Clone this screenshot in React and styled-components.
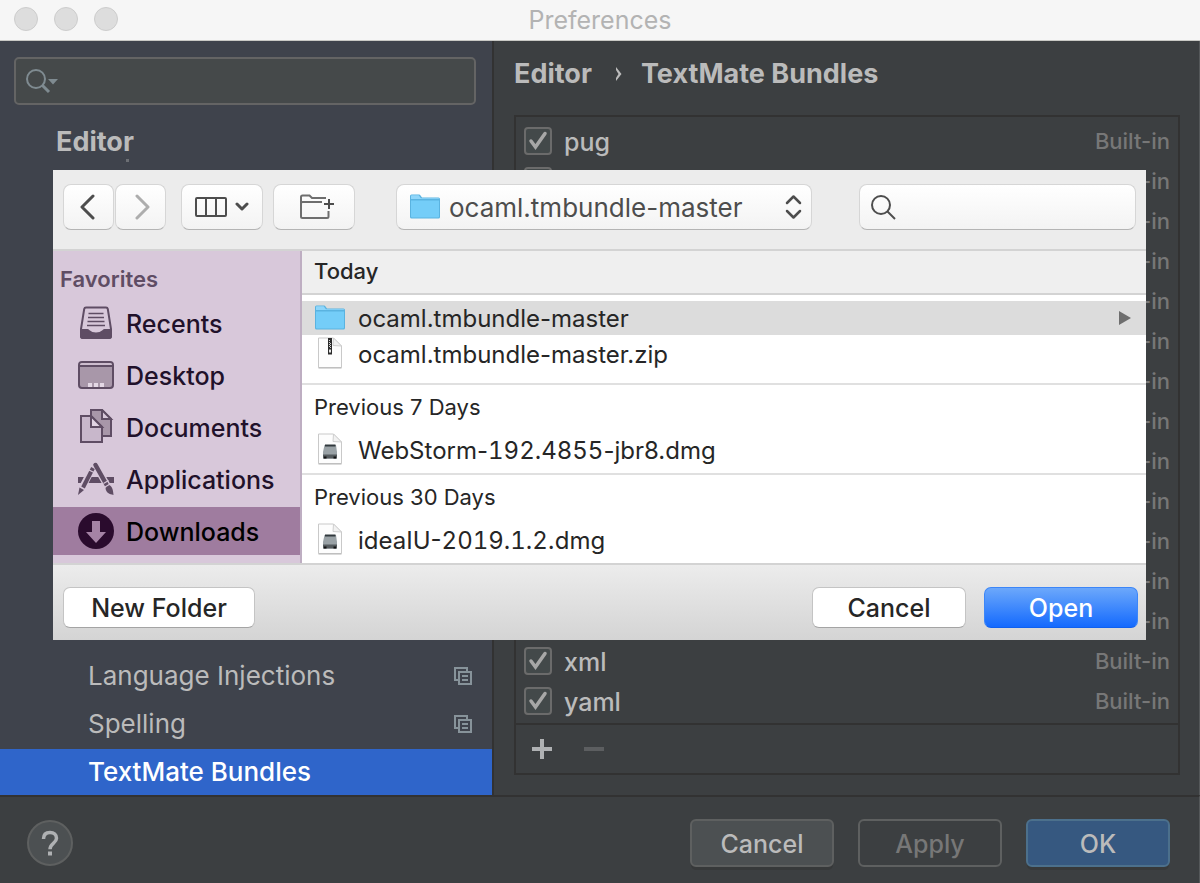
import React from "react";
import styled, { createGlobalStyle, css } from "styled-components";

const GlobalStyle = createGlobalStyle`
  *, *::before, *::after { box-sizing: border-box; }
  body {
    margin: 0;
    background: #3c3f41;
    font-family: Inter, "Liberation Sans", sans-serif;
    font-size: 25px;
    line-height: 32px;
  }
  button, input, select { font: inherit; margin: 0; }
  ul { list-style: none; margin: 0; padding: 0; }
  h1, h2, h3 { margin: 0; font: inherit; }
  svg { display: block; flex: none; }
`;

/* ---------- preferences window ---------- */

const Window = styled.div`
  position: relative;
  display: flex;
  flex-direction: column;
  min-height: 100vh;
  color: #bbbbbb;
  background: #3c3f41;
`;

const TitleBar = styled.header`
  display: grid;
  grid-template-columns: 1fr auto 1fr;
  align-items: center;
  height: 41px;
  padding: 0 14px;
  background: #f6f6f6;
  border-bottom: 1px solid #c9c9c5;
  color: #b3b3b3;
`;

const Lights = styled.div`
  display: flex;
  gap: 16px;
  padding-bottom: 2px;
`;

const Light = styled.button`
  width: 24px;
  height: 24px;
  padding: 0;
  border: 1px solid #cdcdcd;
  border-radius: 50%;
  background: #dddddd;
`;

const Body = styled.div`
  display: flex;
  flex: 1;
  border-right: 1px solid #55585a;
`;

const Sidebar = styled.aside`
  display: flex;
  flex-direction: column;
  width: 494px;
  flex: none;
  padding-top: 16px;
  background: #3f434c;
  border-right: 2px solid #323232;
`;

const Overlay = styled.div`
  display: grid;
  align-items: center;
  & > * { grid-area: 1 / 1; }
  & > svg { pointer-events: none; }
`;

const SettingsSearch = styled(Overlay)`
  margin: 0 16px 0 14px;
  & > svg { margin-left: 12px; }
`;

const SettingsInput = styled.input`
  width: 100%;
  height: 48px;
  padding: 0 12px 0 52px;
  color: #bbbbbb;
  background: #45494a;
  border: 2px solid #646464;
  border-radius: 5px;
  outline: none;
`;

const TreeRoot = styled.h2`
  margin: 20px 0 0 56px;
  padding-top: 1px;
  font-size: 27px;
  font-weight: 700;
  &::after {
    content: "";
    display: block;
    width: 3px;
    height: 3px;
    margin: 1px 0 0 70px;
    background: #6c6f74;
  }
`;

const Tree = styled.ul`
  display: flex;
  flex-direction: column;
  gap: 2px;
  margin-top: auto;
`;

const TreeItem = styled.li`
  display: flex;
  align-items: center;
  justify-content: space-between;
  height: 46px;
  padding: 0 20px 0 88px;
  font-size: 26px;
  ${(p) => p.$selected && css`
    font-weight: 500;
    color: #ffffff;
    background: #2f65ca;
  `}
`;

const Content = styled.main`
  flex: 1;
  display: flex;
  flex-direction: column;
  min-width: 0;
  padding: 17px 19px 20px 20px;
`;

const Breadcrumb = styled.nav`
  display: flex;
  align-items: center;
  height: 32px;
  margin-bottom: 25px;
  font-size: 27px;
  font-weight: 700;
  & > svg { margin: 0 18px 0 23px; }
`;

const BundlePanel = styled.section`
  border: 2px solid #323232;
`;

const BundleList = styled.ul`
  padding: 4px 0 2px;
`;

const BundleRow = styled.li`
  display: flex;
  align-items: center;
  justify-content: space-between;
  height: 40px;
  padding: 0 8px;
`;

const BundleLabel = styled.label`
  display: flex;
  align-items: center;
  gap: 12px;
  font-weight: 500;
`;

const Label = styled.span`
  padding-top: 2px;
`;

const Digits = styled.span`
  font-variant-numeric: tabular-nums;
`;

const Check = styled.input`
  appearance: none;
  width: 28px;
  height: 28px;
  background: #43494a;
  border: 2px solid #6b6b6b;
  border-radius: 4px;
`;

const Origin = styled.span`
  font-size: 22px;
  font-weight: 500;
  color: #777777;
`;

const PanelTools = styled.div`
  display: flex;
  align-items: center;
  gap: 32px;
  height: 50px;
  padding-left: 16px;
  border-top: 2px solid #323232;
`;

const ToolButton = styled.button`
  padding: 0;
  border: 0;
  background: none;
`;

const Footer = styled.footer`
  display: flex;
  align-items: flex-start;
  gap: 24px;
  height: 88px;
  padding: 22px 29px 0 27px;
  border-top: 2px solid #323232;
  border-right: 1px solid #55585a;
`;

const HelpButton = styled.button`
  display: grid;
  place-items: center;
  width: 46px;
  height: 46px;
  margin: 1px auto 0 0;
  padding: 0;
  color: #b0b2b3;
  background: #4c5052;
  border: 2px solid #5e6060;
  border-radius: 50%;
`;

const PrefButton = styled.button`
  width: 144px;
  height: 48px;
  padding: 2px 0 0;
  border-radius: 6px;
  font-weight: 500;
  color: #bbbbbb;
  background: #4c5052;
  border: 2px solid #5e6060;
  box-shadow: 0 4px 0 -1px #37393a;
  ${(p) => p.$kind === "default" && css`
    background: #365880;
    border-color: #4c708c;
  `}
  ${(p) => p.$kind === "disabled" && css`
    color: #777777;
    background: none;
    box-shadow: none;
  `}
`;

/* ---------- file chooser ---------- */

const Chooser = styled.section`
  position: absolute;
  top: 170px;
  left: 53px;
  right: 54px;
  display: flex;
  flex-direction: column;
  color: #262626;
  background: #ececec;
`;

const Toolbar = styled.div`
  display: flex;
  align-items: center;
  height: 81px;
  padding: 0 10px 6px;
  border-bottom: 2px solid #d3d3d3;
`;

const raised = css`
  height: 46px;
  color: #4d4d4d;
  background: linear-gradient(#ffffff, #f3f3f3);
  border: 1px solid #d6d6d6;
  border-bottom-color: #b4b4b4;
  border-radius: 8px;
`;

const BarButton = styled.button`
  ${raised}
  display: flex;
  align-items: center;
  justify-content: center;
  gap: 8px;
  flex: none;
  width: ${(p) => (p.$wide ? 82 : 51)}px;
  padding: 0;
`;

const NavPair = styled.div`
  display: flex;
  gap: 1px;
  margin-right: 15px;
`;

const ViewPair = styled.div`
  display: flex;
  gap: 10px;
`;

const Location = styled(Overlay)`
  flex: 3 1 0;
  margin: 0 47px 0 41px;
  & > svg:nth-of-type(1) { margin-left: 14px; }
  & > svg:nth-of-type(2) { justify-self: end; margin-right: 10px; }
`;

const LocationSelect = styled.select`
  ${raised}
  appearance: none;
  width: 100%;
  padding: 2px 40px 0 52px;
  font-size: 26px;
`;

const ChooserSearch = styled(Overlay)`
  flex: 2 1 0;
  & > svg { margin-left: 11px; }
`;

const ChooserInput = styled.input`
  ${raised}
  width: 100%;
  padding: 0 12px 0 48px;
  outline: none;
`;

const Panes = styled.div`
  display: flex;
  height: 314px;
  border-bottom: 2px solid #d3d3d3;
`;

const Places = styled.nav`
  flex: none;
  width: 249px;
  padding-top: 12px;
  color: #21112a;
  background: #d8c8da;
  border-right: 2px solid #beaec2;
`;

const PlacesTitle = styled.h3`
  margin-bottom: 4px;
  padding-left: 7px;
  font-size: 22px;
  font-weight: 600;
  color: #5f4d64;
`;

const PlaceList = styled.ul`
  display: flex;
  flex-direction: column;
  gap: 4px;
`;

const Place = styled.li`
  display: flex;
  align-items: center;
  gap: 12px;
  height: 48px;
  padding-left: 25px;
  font-weight: 500;
  ${(p) => p.$selected && css`
    color: #000000;
    background: #9f7c9f;
  `}
`;

const Files = styled.div`
  flex: 1;
  min-width: 0;
  background: #ffffff;
`;

const Group = styled.section`
  border-top: ${(p) => (p.$first ? 0 : 2)}px solid #e0e0e0;
  padding-bottom: ${(p) => (p.$first ? 12 : 6)}px;
`;

const GroupTitle = styled.h3`
  height: 44px;
  padding-left: 12px;
  font-size: 22px;
  line-height: 44px;
  ${(p) => p.$first && css`
    font-weight: 500;
    line-height: 40px;
    background: #efefef;
    border-bottom: 2px solid #d3d3d3;
  `}
`;

const FileList = styled.ul`
  display: flex;
  flex-direction: column;
  gap: 2px;
  padding-top: ${(p) => (p.$first ? 6 : 4)}px;
`;

const FileRow = styled.li`
  display: flex;
  align-items: center;
  gap: 13px;
  height: 34px;
  padding: 0 14px 0 13px;
  font-size: 24px;
  background: ${(p) => (p.$selected ? "#dcdcdc" : "none")};
  & > svg:nth-of-type(2) { margin-left: auto; }
`;

const Actions = styled.div`
  display: flex;
  align-items: flex-start;
  gap: 18px;
  height: 75px;
  padding: 22px 8px 0 10px;
  background: linear-gradient(#ececec, #d4d4d4);
`;

const ActionButton = styled.button`
  width: ${(p) => (p.$start ? 192 : 154)}px;
  height: 41px;
  margin-right: ${(p) => (p.$start ? "auto" : 0)};
  padding: 0;
  font-weight: 500;
  color: ${(p) => (p.$primary ? "#ffffff" : "#262626")};
  background: ${(p) => (p.$primary ? "linear-gradient(#6ca8fb, #146afe)" : "#ffffff")};
  border: 1px solid ${(p) => (p.$primary ? "#3c86f8" : "#c4c4c4")};
  border-bottom-color: ${(p) => (p.$primary ? "#0f60ee" : "#a4a4a4")};
  border-radius: 7px;
`;

/* ---------- icons ---------- */

const SettingsSearchIcon = () => (
  <svg width="34" height="26" viewBox="0 0 34 26" fill="none" stroke="#7f8b91">
    <circle cx="10" cy="11" r="9" strokeWidth="2" />
    <path d="M16.5 17.5L23 24" strokeWidth="3" />
    <path d="M22 11h10l-5 5.500z" fill="#7f8b91" stroke="none" />
  </svg>
);

const CopyIcon = () => (
  <svg width="18" height="18" viewBox="0 0 18 18" fill="none" stroke="#87939a" strokeWidth="2">
    <path d="M4 13H1V1h12v3" />
    <path d="M5 5h12v12H5z" />
    <path d="M8 9h6M8 13h6" />
  </svg>
);

const CrumbArrow = () => (
  <svg width="8" height="16" viewBox="0 0 8 16" fill="#bbbbbb">
    <path d="M1 1l5.500 7L1 15v-3l2.500-4L1 4z" />
  </svg>
);

const CheckMark = () => (
  <svg width="28" height="28" viewBox="0 0 28 28" fill="none" stroke="#a7a7a7" strokeWidth="3.500">
    <path d="M7 14l4.500 6L21 6.500" strokeLinecap="round" />
  </svg>
);

const AddIcon = () => (
  <svg width="20" height="20" viewBox="0 0 20 20" fill="#afb1b3">
    <path d="M8 0h4v8h8v4h-8v8H8v-8H0V8h8z" />
  </svg>
);

const RemoveIcon = () => (
  <svg width="20" height="20" viewBox="0 0 20 20" fill="#5c5e60">
    <path d="M0 8h20v4H0z" />
  </svg>
);

const HelpIcon = () => (
  <svg width="18" height="26" viewBox="0 0 18 26" fill="none" stroke="#afb1b3" strokeWidth="3.500">
    <path d="M2.500 9c0-4.200 2.500-6.500 6.500-6.500s6.500 2.300 6.500 5.700c0 4.800-6.500 5.400-6.500 11" />
    <path d="M9 21.500v4" strokeWidth="4" />
  </svg>
);

const Chevron = ({ forward }) => (
  <svg width="18" height="26" viewBox={forward ? "-2 0 18 26" : "0 0 18 26"} fill="none" stroke={forward ? "#adadad" : "#4d4d4d"} strokeWidth="3" strokeLinecap="round" strokeLinejoin="round">
    <path d={forward ? "M3 2l11 11L3 24" : "M13 2L2 13l11 11"} />
  </svg>
);

const ColumnsIcon = () => (
  <svg width="32" height="20" viewBox="0 0 32 20" fill="none" stroke="#4d4d4d" strokeWidth="2">
    <rect x="1" y="1" width="30" height="18" rx="1" />
    <path d="M11 1v18M21 1v18" />
  </svg>
);

const DownIcon = () => (
  <svg width="14" height="9" viewBox="0 0 14 9" fill="none" stroke="#4d4d4d" strokeWidth="3" strokeLinecap="round" strokeLinejoin="round">
    <path d="M2 2l5 5 5-5" />
  </svg>
);

const NewFolderIcon = () => (
  <svg width="40" height="26" viewBox="-4 0 40 26" fill="none" stroke="#6e6e6e" strokeWidth="2">
    <path d="M28 4H14L11.500 1.500H4.500Q3 1.500 3 3v19.500q0 1.500 1.500 1.500H29q1.500 0 1.500-1.500V17M3 9.500q0-1.500 1.500-1.500H24" />
    <path d="M31 5v10M26 10h10" stroke="#4d4d4d" />
  </svg>
);

const FolderIcon = () => (
  <svg width="30" height="26" viewBox="0 0 30 26">
    <path d="M0 2q0-1.500 1.500-1.500h7.500q1 0 1.500 1L12 3.500h16.500q1.500 0 1.500 1.500v18q0 1.500-1.500 1.500h-27Q0 24.500 0 23z" fill="#5ab3e0" />
    <path d="M1 5V2q0-.700.700-.700h7l2.200 3H28.500q.5 0 .5.700z" fill="#8fd6fa" />
    <path d="M1 6.500h28V22.500q0 1-1 1H2q-1 0-1-1z" fill="#74cdf8" />
  </svg>
);

const UpDownIcon = () => (
  <svg width="17" height="26" viewBox="0 0 17 26" fill="none" stroke="#4d4d4d" strokeWidth="2.500" strokeLinecap="round" strokeLinejoin="round">
    <path d="M2 9l6.500-6.500L15 9M2 17l6.500 6.500L15 17" />
  </svg>
);

const SearchIcon = () => (
  <svg width="26" height="26" viewBox="0 0 26 26" fill="none" stroke="#4d4d4d" strokeWidth="2">
    <circle cx="11" cy="11" r="9" />
    <path d="M17.500 17.500L25 25" />
  </svg>
);

const RecentsIcon = () => (
  <svg width="36" height="36" viewBox="0 0 36 36" fill="none" stroke="#5f4d64" strokeWidth="2">
    <path d="M8 2.500h20q1.500 0 1.800 1.500L33 24v7q0 2-2 2H5q-2 0-2-2v-7L6.200 4Q6.500 2.500 8 2.500z" />
    <path d="M3 25h6.500c1.500 0 2 3.500 8.500 3.500s7-3.500 8.500-3.500H33v6q0 2-2 2H5q-2 0-2-2z" fill="#5f4d64" />
    <path d="M10.500 8.500h15M10 12.500h16M9.500 16.500h17M9 20.500h18" strokeWidth="1.500" />
  </svg>
);

const DesktopIcon = () => (
  <svg width="36" height="36" viewBox="0 0 36 36">
    <rect x="1" y="5" width="34" height="26" rx="3" fill="#a897a9" stroke="#5f4d64" strokeWidth="2" />
    <path d="M2 8q0-2 2-2h28q2 0 2 2z" fill="#cdbdce" />
    <path d="M1 9h34" stroke="#5f4d64" strokeWidth="2" />
    <path d="M10 26h4v4h-4zM16 26h4v4h-4zM22 26h4v4h-4z" fill="#e4d8e5" />
  </svg>
);

const DocumentsIcon = () => (
  <svg width="36" height="36" viewBox="0 0 36 36" stroke="#5f4d64" strokeWidth="2">
    <path d="M13 1h11l9 9v17H13z" fill="#a897a9" />
    <path d="M24 1v9h9z" fill="#d8c8da" />
    <path d="M3 7h10l11 11v15H3z" fill="#c8b7cb" />
    <path d="M13 7v11h11z" fill="#e1d4e3" />
  </svg>
);

const ApplicationsIcon = () => (
  <svg width="36" height="36" viewBox="0 0 36 36">
    <path d="M0 16h36v6H0z" fill="#5f4d64" />
    <path d="M15.500 5L3 29M17 3l14 25" stroke="#d8c8da" strokeWidth="7" fill="none" />
    <path d="M15 7L5 26.500" stroke="#5f4d64" strokeWidth="4" />
    <path d="M1.500 26.500l4.500 2.500L0 34z" fill="#5f4d64" />
    <path d="M17.500 4L29 24.500" stroke="#5f4d64" strokeWidth="4.500" strokeLinecap="round" />
    <path d="M27.500 27l4-3c3.500 2.500 3.500 6 4 10-4-1-7.500-2-8-7z" fill="#5f4d64" />
    <path d="M11 9l5 2.500M25.500 22.500l5-3M27 26l5-3" stroke="#d8c8da" strokeWidth="1.200" />
  </svg>
);

const DownloadsIcon = () => (
  <svg width="36" height="36" viewBox="0 0 36 36">
    <circle cx="18" cy="18" r="18" fill="#2a0b2d" />
    <path d="M14 8h8v11h6L18 30 8 19h6z" fill="#a583a5" />
  </svg>
);

const Sheet = ({ children }) => (
  <svg width="30" height="34" viewBox="0 0 30 34">
    <path d="M3.500 1h15L26.500 9v21.500h-23z" fill="#fdfdfd" stroke="#c9c9c9" />
    <path d="M18.500 1l-.5 7.500 8.500.5z" fill="#f1f1f1" stroke="#cfcfcf" />
    <path d="M3.500 31h23" stroke="#b5b5b5" />
    {children}
  </svg>
);

const ZipIcon = () => (
  <Sheet>
    <path d="M13 1h4v16.500h-4z" fill="#2c2c2c" />
    <path d="M14.500 3v7M15.500 6v5" stroke="#d5d5d5" strokeWidth="1" strokeDasharray="1 1" />
    <path d="M14 12.500h2v3h-2z" fill="#e8e8e8" />
  </Sheet>
);

const DiskIcon = () => (
  <Sheet>
    <path d="M9.500 12h11.500l1 7v6.500H8V19z" fill="#9aa2a6" />
    <path d="M10 11.500h10.500v2H10z" fill="#30383c" />
    <path d="M8 21.500h14v4H8z" fill="#555b5e" />
    <path d="M9 24.500h2.500M18.500 24.500H21" stroke="#111111" strokeWidth="2" />
  </Sheet>
);

const DisclosureIcon = () => (
  <svg width="14" height="14" viewBox="0 0 14 14" fill="#6e6e6e">
    <path d="M1 0l12 7-12 7z" />
  </svg>
);

/* ---------- data ---------- */

/* Rows that lie behind the file chooser have a description only. */
const BUNDLES = [
  { name: "pug" },
  ...Array.from({ length: 12 }, (_, i) => ({ description: `Bundle ${i + 2}` })),
  { name: "xml" },
  { name: "yaml" },
];

const SETTINGS = [
  { name: "Language Injections", project: true },
  { name: "Spelling", project: true },
  { name: "TextMate Bundles", selected: true },
];

const PLACES = [
  { name: "Recents", Icon: RecentsIcon },
  { name: "Desktop", Icon: DesktopIcon },
  { name: "Documents", Icon: DocumentsIcon },
  { name: "Applications", Icon: ApplicationsIcon },
  { name: "Downloads", Icon: DownloadsIcon, selected: true },
];

const GROUPS = [
  {
    title: "Today",
    files: [
      { name: "ocaml.tmbundle-master", Icon: FolderIcon, selected: true },
      { name: "ocaml.tmbundle-master.zip", Icon: ZipIcon },
    ],
  },
  { title: "Previous 7 Days", files: [{ name: "WebStorm-192.4855-jbr8.dmg", Icon: DiskIcon }] },
  { title: "Previous 30 Days", files: [{ name: "ideaIU-2019.1.2.dmg", Icon: DiskIcon }] },
];

/* Version numbers are set in tabular figures, the rest of a name is not. */
function FileName({ name }) {
  return (
    <Label>
      {name.split(/(\d[\d.]*\d)/).map((part, i) => (i % 2 ? <Digits key={i}>{part}</Digits> : part))}
    </Label>
  );
}

function FileChooser() {
  return (
    <Chooser role="dialog" aria-label="Choose bundle">
      <Toolbar>
        <NavPair>
          <BarButton aria-label="Back"><Chevron /></BarButton>
          <BarButton aria-label="Forward"><Chevron forward /></BarButton>
        </NavPair>
        <ViewPair>
          <BarButton $wide aria-label="View"><ColumnsIcon /><DownIcon /></BarButton>
          <BarButton $wide aria-label="Group"><NewFolderIcon /></BarButton>
        </ViewPair>
        <Location>
          <LocationSelect aria-label="Location">
            <option>ocaml.tmbundle-master</option>
          </LocationSelect>
          <FolderIcon />
          <UpDownIcon />
        </Location>
        <ChooserSearch>
          <ChooserInput type="text" aria-label="Search files" />
          <SearchIcon />
        </ChooserSearch>
      </Toolbar>
      <Panes>
        <Places>
          <PlacesTitle>Favorites</PlacesTitle>
          <PlaceList>
            {PLACES.map(({ name, Icon, selected }) => (
              <Place key={name} $selected={selected}><Icon /><Label>{name}</Label></Place>
            ))}
          </PlaceList>
        </Places>
        <Files>
          {GROUPS.map(({ title, files }, i) => (
            <Group key={title} $first={i === 0}>
              <GroupTitle $first={i === 0}>{title}</GroupTitle>
              <FileList $first={i === 0}>
                {files.map(({ name, Icon, selected }) => (
                  <FileRow key={name} $selected={selected}>
                    <Icon />
                    <FileName name={name} />
                    {selected && <DisclosureIcon />}
                  </FileRow>
                ))}
              </FileList>
            </Group>
          ))}
        </Files>
      </Panes>
      <Actions>
        <ActionButton $start>New Folder</ActionButton>
        <ActionButton>Cancel</ActionButton>
        <ActionButton $primary>Open</ActionButton>
      </Actions>
    </Chooser>
  );
}

export default function App() {
  return (
    <Window>
      <GlobalStyle />
      <TitleBar>
        <Lights>
          <Light aria-label="Close" />
          <Light aria-label="Minimize" />
          <Light aria-label="Zoom" />
        </Lights>
        <h1>Preferences</h1>
      </TitleBar>
      <Body>
        <Sidebar>
          <SettingsSearch>
            <SettingsInput type="text" aria-label="Search settings" />
            <SettingsSearchIcon />
          </SettingsSearch>
          <TreeRoot>Editor</TreeRoot>
          <Tree>
            {SETTINGS.map(({ name, project, selected }) => (
              <TreeItem key={name} $selected={selected}>
                {name}
                {project && <CopyIcon />}
              </TreeItem>
            ))}
          </Tree>
        </Sidebar>
        <Content>
          <Breadcrumb>
            <span>Editor</span>
            <CrumbArrow />
            <span>TextMate Bundles</span>
          </Breadcrumb>
          <BundlePanel>
            <BundleList>
              {BUNDLES.map(({ name, description }) => (
                <BundleRow key={name || description}>
                  <BundleLabel>
                    <Overlay>
                      <Check type="checkbox" defaultChecked aria-label={description} />
                      <CheckMark />
                    </Overlay>
                    {name && <Label>{name}</Label>}
                  </BundleLabel>
                  <Origin>Built-in</Origin>
                </BundleRow>
              ))}
            </BundleList>
            <PanelTools>
              <ToolButton aria-label="Add"><AddIcon /></ToolButton>
              <ToolButton aria-label="Remove" disabled><RemoveIcon /></ToolButton>
            </PanelTools>
          </BundlePanel>
        </Content>
      </Body>
      <Footer>
        <HelpButton aria-label="Help"><HelpIcon /></HelpButton>
        <PrefButton>Cancel</PrefButton>
        <PrefButton $kind="disabled" disabled>Apply</PrefButton>
        <PrefButton $kind="default">OK</PrefButton>
      </Footer>
      <FileChooser />
    </Window>
  );
}
